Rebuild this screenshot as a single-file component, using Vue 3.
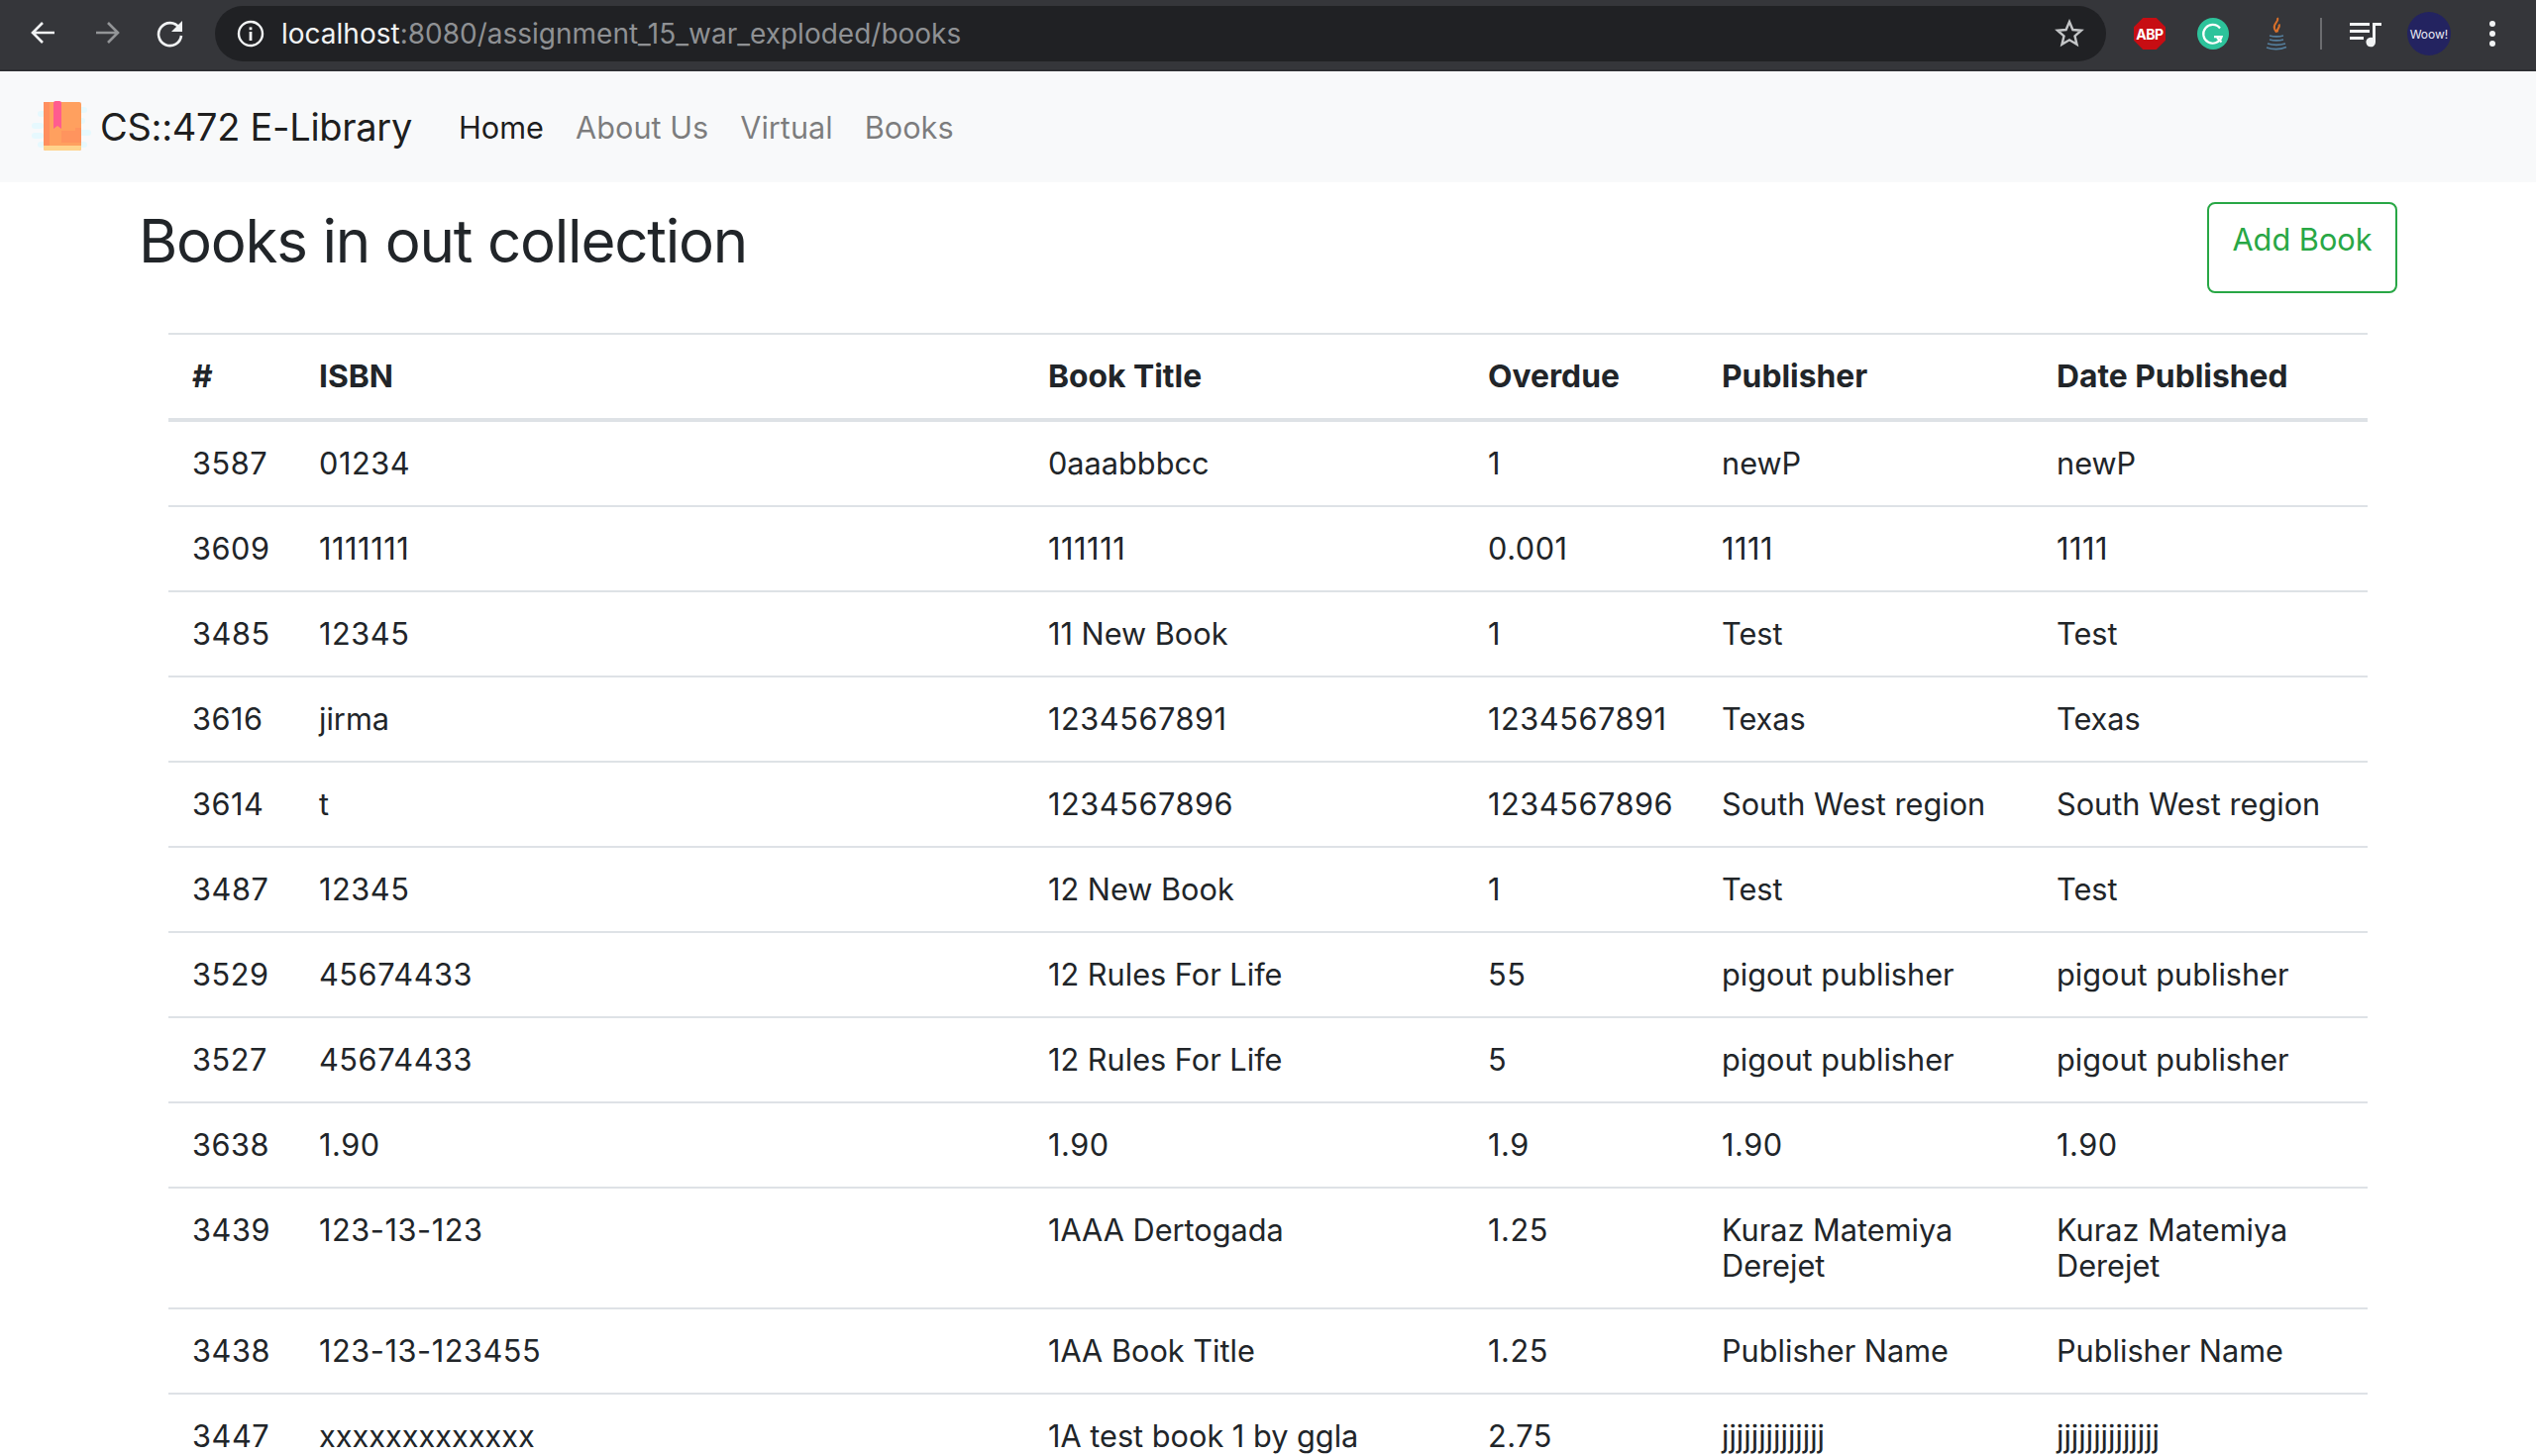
<template>
  <div class="page">
    <!-- browser chrome -->
    <div class="toolbar">
      <div class="tool-btn">
        <svg width="32" height="32" viewBox="0 0 32 32"><path d="M27 15H6M15 5 5 15l10 10" class="stroke" /></svg>
      </div>
      <div class="tool-btn dim">
        <svg width="32" height="32" viewBox="0 0 32 32"><path d="M5 15h21M17 5l10 10-10 10" class="stroke" /></svg>
      </div>
      <div class="tool-btn">
        <svg width="32" height="32" viewBox="0 0 32 32"><path d="M25 10a11.5 11.5 0 1 0 2 8" class="stroke" /><path d="M28 3v11H17z" fill="#f1f3f4" /></svg>
      </div>
      <div class="address">
        <svg class="info" width="28" height="28" viewBox="0 0 28 28">
          <circle cx="14" cy="14" r="12" fill="none" stroke="#f1f3f4" stroke-width="2.4" />
          <rect x="12.6" y="12" width="2.8" height="9" fill="#f1f3f4" />
          <rect x="12.6" y="7.4" width="2.8" height="2.8" fill="#f1f3f4" />
        </svg>
        <div class="url"><span class="host">localhost</span>:8080/assignment_15_war_exploded/books</div>
        <svg class="star" width="30" height="30" viewBox="0 0 30 30">
          <path d="M15 3l3.4 8 8.6.7-6.5 5.700 2 8.400-7.500-4.500-7.500 4.500 2-8.400L3 11.700l8.600-.7z" fill="none" stroke="#c4c6c8" stroke-width="2.4" />
        </svg>
      </div>
      <div class="extensions">
        <div class="tool-btn">
          <div class="abp">ABP</div>
        </div>
        <div class="tool-btn">
          <svg width="32" height="32" viewBox="0 0 32 32">
            <circle cx="16" cy="16" r="16" fill="#2dc39b" />
            <path d="M23 10.5a9.4 9.4 0 1 0 1.600 8.600H17" fill="none" stroke="#fff" stroke-width="2.2" />
            <path d="M20 20l4.500 4.500" stroke="#fff" stroke-width="2.2" />
          </svg>
        </div>
        <div class="tool-btn">
          <svg width="24" height="34" viewBox="0 0 24 34">
            <path d="M13 1c2 4-5 6-3 11 .6 1.600 1.500 2.500 2 3.500-.3-3 4.500-4.500 2.500-8 1.500 3-2.500 5-1.500 8" fill="none" stroke="#d9702a" stroke-width="2" />
            <path d="M5 19c4 1 10 1 14 0M5 23c4 1 10 1 14 0M3 27c5 1.500 13 1.500 18 0M2 31c6 2 14 2 20-.5" fill="none" stroke="#557f9e" stroke-width="1.600" />
          </svg>
        </div>
      </div>
      <div class="sep-box"><div class="sep"></div></div>
      <div class="tool-btn">
        <svg width="32" height="28" viewBox="0 0 32 28">
          <path d="M0 3h20v3H0zM0 10h20v3H0zM0 17h14v3H0z" fill="#f1f3f4" />
          <path d="M23 3h9v3h-6v16.500a4.800 4.800 0 1 1-3-4.400z" fill="#f1f3f4" />
        </svg>
      </div>
      <div class="tool-btn">
        <div class="avatar">Woow!</div>
      </div>
      <div class="tool-btn">
        <svg width="6" height="26" viewBox="0 0 6 26"><circle cx="3" cy="3" r="3" fill="#f1f3f4" /><circle cx="3" cy="13" r="3" fill="#f1f3f4" /><circle cx="3" cy="23" r="3" fill="#f1f3f4" /></svg>
      </div>
    </div>

    <!-- navbar -->
    <nav class="navbar">
      <svg class="logo" width="60" height="52" viewBox="0 0 60 52">
        <g fill="#e6f9fe">
          <rect x="6" y="10" width="10" height="6" rx="3" />
          <rect x="0" y="22" width="12" height="6" rx="3" />
          <rect x="0" y="32" width="12" height="6" rx="3" />
          <rect x="6" y="41" width="10" height="6" rx="3" />
          <rect x="46" y="6" width="10" height="6" rx="3" />
          <rect x="46" y="17" width="8" height="6" rx="3" />
          <rect x="46" y="29" width="14" height="6" rx="3" />
          <rect x="46" y="41" width="10" height="6" rx="3" />
        </g>
        <rect x="12" y="1" width="38" height="49" rx="2" fill="#ffa05f" />
        <rect x="12" y="1" width="6" height="45" fill="#ff8f5e" />
        <path d="M12 45h38v3a2 2 0 0 1-2 2H14a2 2 0 0 1-2-2z" fill="#ffd38c" />
        <path d="M30 30h14v-3h6v15H30z" fill="#ff8f5e" opacity=".7" />
        <path d="M22 2a2 2 0 0 1 2-2h4a2 2 0 0 1 2 2v26l-4-3-4 3z" fill="#ff5c8f" />
      </svg>
      <a class="brand">CS::472 E-Library</a>
      <div class="nav-links">
        <a v-for="link in links" :key="link" class="nav-link" :class="{ active: link === 'Home' }">{{ link }}</a>
      </div>
    </nav>

    <main class="content">
      <div class="heading">
        <h1 class="title">Books in out collection</h1>
        <button class="add-btn">Add Book</button>
      </div>

      <div class="table-wrap">
        <table class="books">
          <thead>
            <tr>
              <th v-for="h in headers" :key="h">{{ h }}</th>
            </tr>
          </thead>
          <tbody>
            <tr v-for="book in books" :key="book.id">
              <td v-for="(cell, i) in cells(book)" :key="i" :class="{ numeric: isNumeric(cell) }">{{ cell }}</td>
            </tr>
          </tbody>
        </table>
      </div>
    </main>
  </div>
</template>

<script setup>
const links = ['Home', 'About Us', 'Virtual', 'Books']
const headers = ['#', 'ISBN', 'Book Title', 'Overdue', 'Publisher', 'Date Published']

const books = [
  { id: '3587', isbn: '01234', title: '0aaabbbcc', overdue: '1', publisher: 'newP' },
  { id: '3609', isbn: '1111111', title: '111111', overdue: '0.001', publisher: '1111' },
  { id: '3485', isbn: '12345', title: '11 New Book', overdue: '1', publisher: 'Test' },
  { id: '3616', isbn: 'jirma', title: '1234567891', overdue: '1234567891', publisher: 'Texas' },
  { id: '3614', isbn: 't', title: '1234567896', overdue: '1234567896', publisher: 'South West region' },
  { id: '3487', isbn: '12345', title: '12 New Book', overdue: '1', publisher: 'Test' },
  { id: '3529', isbn: '45674433', title: '12 Rules For Life', overdue: '55', publisher: 'pigout publisher' },
  { id: '3527', isbn: '45674433', title: '12 Rules For Life', overdue: '5', publisher: 'pigout publisher' },
  { id: '3638', isbn: '1.90', title: '1.90', overdue: '1.9', publisher: '1.90' },
  { id: '3439', isbn: '123-13-123', title: '1AAA Dertogada', overdue: '1.25', publisher: 'Kuraz Matemiya Derejet' },
  { id: '3438', isbn: '123-13-123455', title: '1AA Book Title', overdue: '1.25', publisher: 'Publisher Name' },
  { id: '3447', isbn: 'xxxxxxxxxxxxx', title: '1A test book 1 by ggla', overdue: '2.75', publisher: 'jjjjjjjjjjjjjj' }
]

// publisher is shown twice, the page prints it under Date Published as well
const cells = (b) => [b.id, b.isbn, b.title, b.overdue, b.publisher, b.publisher]
const isNumeric = (v) => /^[\d.-]+$/.test(v)
</script>

<style>
html, body {
  margin: 0;
  overflow: hidden;
}
</style>

<style scoped>
.page {
  height: 100vh;
  overflow: hidden;
  background: #fff;
  color: #212529;
  font-family: Inter, "Liberation Sans", sans-serif;
}

.toolbar {
  height: 72px;
  box-sizing: border-box;
  padding: 0 12px 2px;
  display: flex;
  align-items: center;
  background: #35363a;
  border-bottom: 2px solid #2e2f33;
}

.tool-btn {
  width: 64px;
  height: 44px;
  flex: none;
  display: flex;
  align-items: center;
  justify-content: center;
}
.tool-btn.dim { opacity: 0.5; }

.stroke {
  fill: none;
  stroke: #f1f3f4;
  stroke-width: 2.6;
}

.address {
  flex: 1;
  height: 56px;
  margin: 0 12px 0 13px;
  padding: 0 22px;
  display: flex;
  align-items: center;
  background: #202124;
  border-radius: 28px;
}
.info { flex: none; }
.url {
  flex: 1;
  margin-left: 17px;
  font-size: 28px;
  color: #8f9194;
}
.host { color: #f1f3f4; }
.star { flex: none; }

.extensions { display: flex; flex: none; }

.abp {
  width: 32px;
  height: 32px;
  display: flex;
  align-items: center;
  justify-content: center;
  background: #c70d13;
  color: #fff;
  font-size: 14px;
  font-weight: 700;
  letter-spacing: -0.5px;
  clip-path: polygon(29% 0, 71% 0, 100% 29%, 100% 71%, 71% 100%, 29% 100%, 0 71%, 0 29%);
}

.sep-box {
  width: 26px;
  flex: none;
  display: flex;
  justify-content: center;
}
.sep {
  width: 2px;
  height: 32px;
  background: #6b6c6f;
}

.avatar {
  width: 44px;
  height: 44px;
  display: flex;
  align-items: center;
  justify-content: center;
  border-radius: 50%;
  background: #232360;
  color: #e8e8f4;
  font-size: 12px;
}

.navbar {
  height: 112px;
  box-sizing: border-box;
  padding-left: 32px;
  display: flex;
  align-items: center;
  background: #f8f9fa;
}
.logo { flex: none; margin-right: 9px; }
.brand {
  font-size: 38px;
  letter-spacing: -0.3px;
  color: rgba(0, 0, 0, 0.9);
}
.nav-links {
  display: flex;
  gap: 32px;
  margin-left: 47px;
}
.nav-link {
  font-size: 30.7px;
  color: rgba(0, 0, 0, 0.5);
}
.nav-link.active { color: rgba(0, 0, 0, 0.9); }

.content { padding: 20px 140px 0; }

.heading {
  display: flex;
  justify-content: space-between;
  align-items: flex-start;
  height: 132px;
}
.title {
  margin: 0;
  font-size: 60px;
  font-weight: 400;
  letter-spacing: -1.2px;
  line-height: 78px;
}
.add-btn {
  width: 192px;
  height: 92px;
  box-sizing: border-box;
  padding: 18px 0 34px;
  background: #fff;
  border: 2px solid #28a745;
  border-radius: 8px;
  color: #28a745;
  font: 400 30.7px/36px Inter, "Liberation Sans", sans-serif;
}

.table-wrap { padding: 0 30px; }

.books {
  width: 100%;
  table-layout: fixed;
  border-collapse: separate;
  border-spacing: 0;
  font-size: 30.7px;
  line-height: 36px;
}
.books th,
.books td {
  padding: 24px;
  text-align: left;
  vertical-align: top;
}
.books th {
  font-size: 31.8px;
  font-weight: 700;
  border-top: 2px solid #dee2e6;
  border-bottom: 4px solid #dee2e6;
}
.books td { border-bottom: 2px solid #dee2e6; }
.books td.numeric { letter-spacing: 0.55px; }

/* column widths read off the screenshot */
.books th:nth-child(1) { width: 80px; }
.books th:nth-child(2) { width: 688px; }
.books th:nth-child(3) { width: 396px; }
.books th:nth-child(4) { width: 188px; }
.books th:nth-child(5) { width: 290px; }
</style>
